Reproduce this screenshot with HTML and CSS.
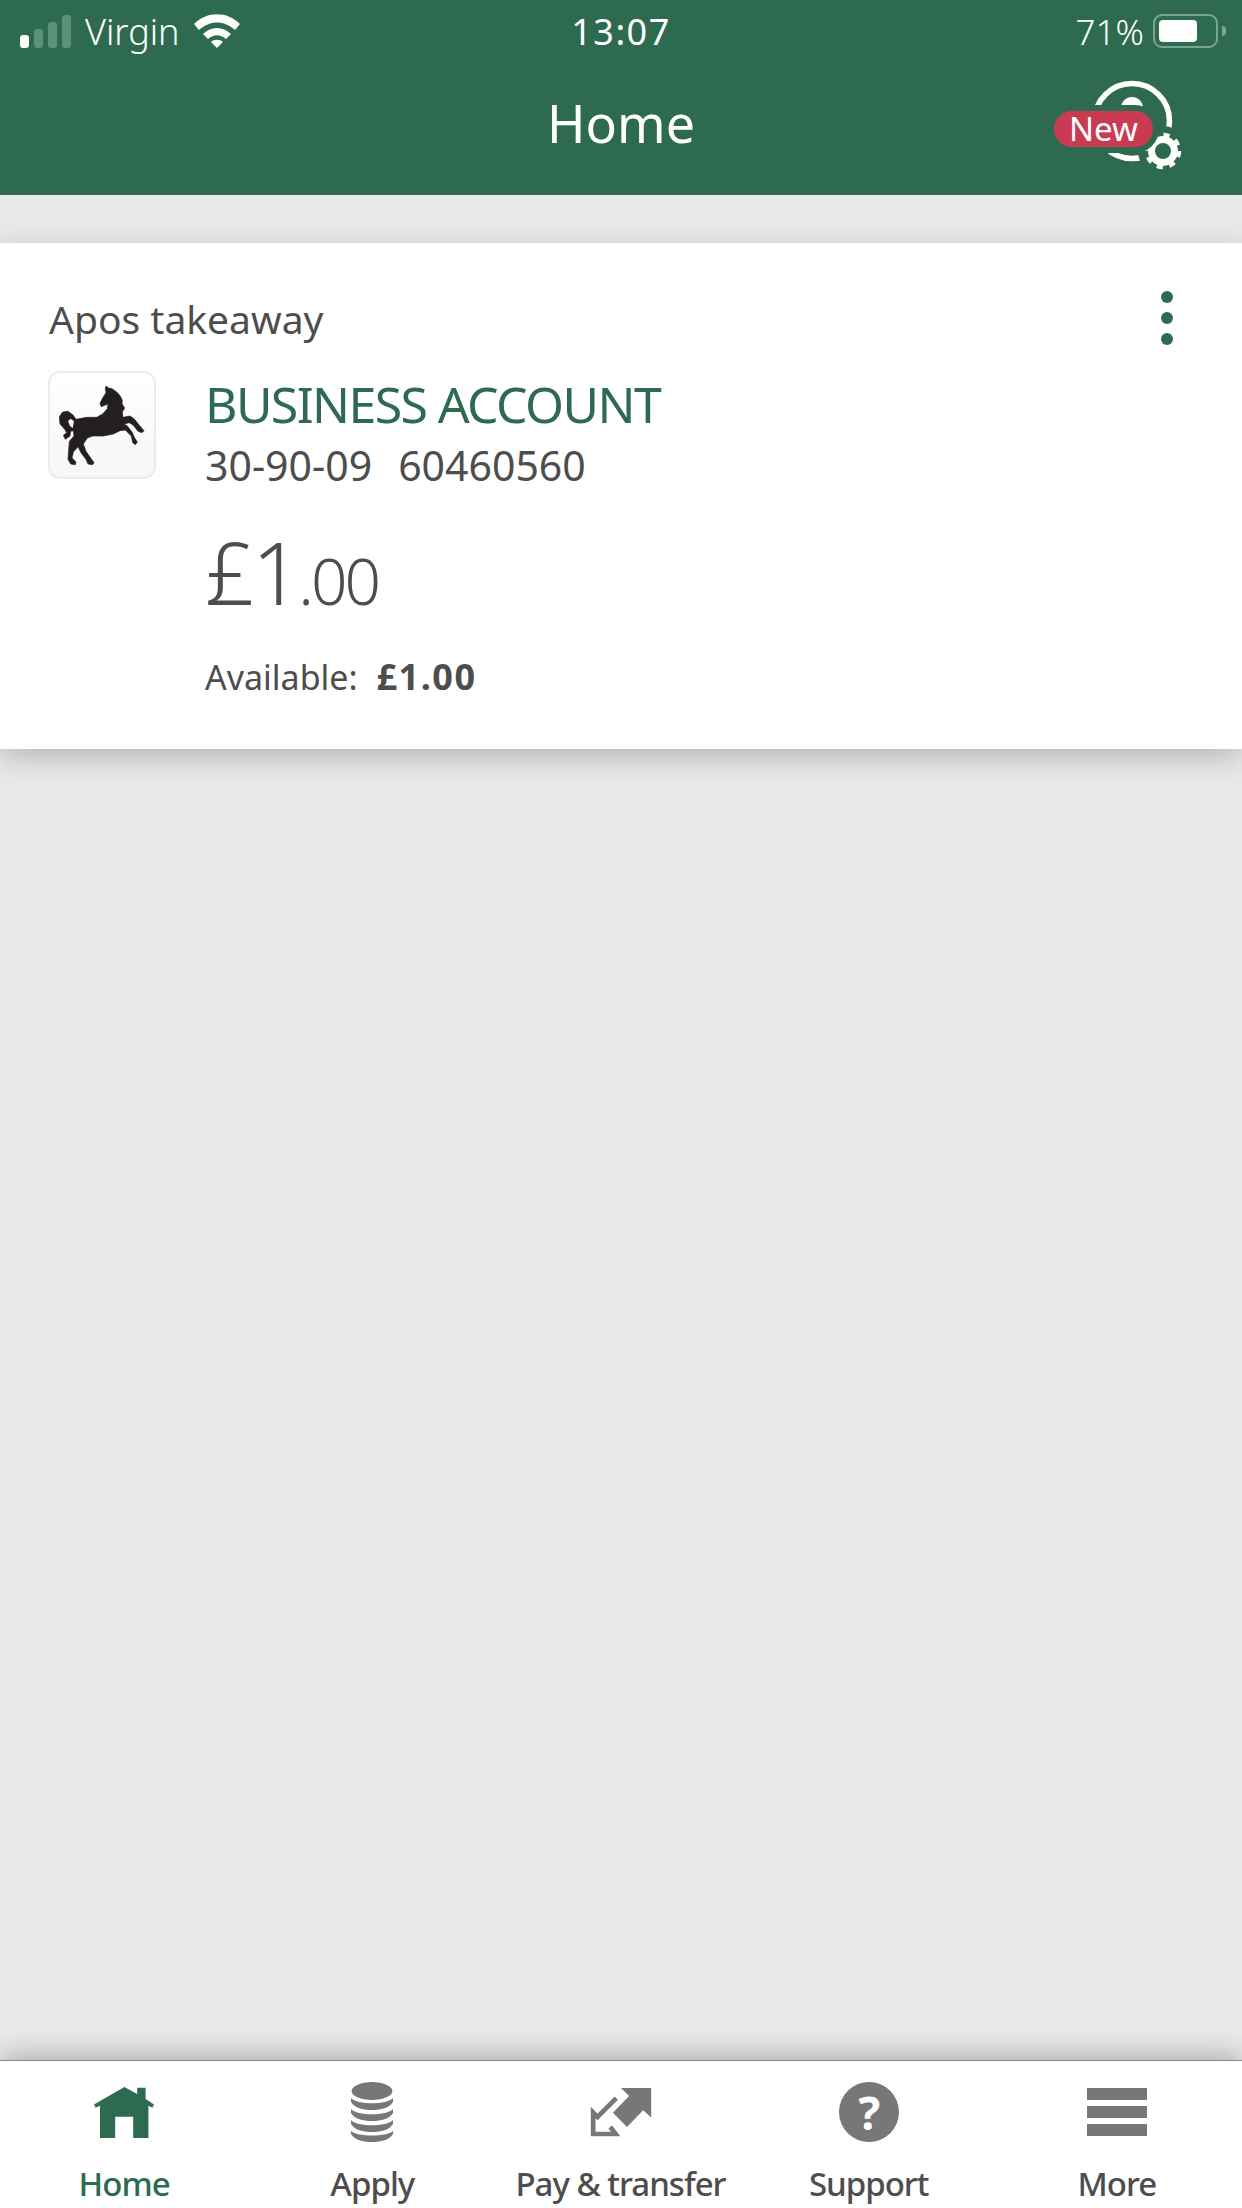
FILE: index.html
```html
<!DOCTYPE html>
<html>
<head>
    <title>Home</title>
    <link rel="stylesheet" href="styles.css">
</head>
<body>
    <header class="app-header">
        <div class="status-bar">
            <div class="status-left">
                <svg class="signal" width="52" height="33" viewBox="0 0 52 33">
                    <rect x="0" y="20" width="9" height="13" rx="3" fill="#fff"/>
                    <rect x="14" y="14" width="9" height="19" rx="3" fill="#5b9179"/>
                    <rect x="28" y="7" width="9" height="26" rx="3" fill="#5b9179"/>
                    <rect x="42" y="0" width="9" height="33" rx="3" fill="#5b9179"/>
                </svg>
                <span class="carrier">Virgin</span>
                <svg class="wifi" width="46" height="34" viewBox="0 0 46 34">
                    <path d="M0 10 C13 -3 33 -3 46 10 L41 16 C30 6 16 6 5 16 Z" fill="#fff"/>
                    <path d="M9 20 C17 12 29 12 37 20 L32 25 C26 20 20 20 14 25 Z" fill="#fff"/>
                    <path d="M17 28 C20 25 26 25 29 28 L23 34 Z" fill="#fff"/>
                </svg>
            </div>
            <div class="status-time">13:07</div>
            <div class="status-right">
                <span class="battery-pct">71%</span>
                <div class="battery"><div class="battery-fill"></div></div>
                <div class="battery-nub"></div>
            </div>
        </div>
        <div class="title-bar">
            <div></div>
            <h1>Home</h1>
            <div class="settings-btn">
                <svg width="100" height="92" viewBox="0 0 100 92">
                    <circle cx="47" cy="43" r="37.5" fill="none" stroke="#fff" stroke-width="5.5"/>
                    <circle cx="47" cy="30" r="11" fill="#fff"/>
                    <circle cx="78" cy="73" r="25" fill="#2d6a50"/>
                    <circle cx="78" cy="73" r="11.5" fill="none" stroke="#fff" stroke-width="7"/>
                    <circle cx="78" cy="73" r="16" fill="none" stroke="#fff" stroke-width="4.5" stroke-dasharray="6 6.57"/>
                </svg>
                <span class="new-badge">New</span>
            </div>
        </div>
    </header>

    <main class="content">
        <section class="account-card">
            <div class="card-top">
                <span class="business-name">Apos takeaway</span>
                <div class="kebab"><i></i><i></i><i></i></div>
            </div>
            <div class="card-body">
                <div class="logo-box">
                    <svg width="104" height="100" viewBox="0 0 312 300">
                        <polygon fill="#231f20" stroke="#231f20" stroke-width="2" stroke-linejoin="round" points="168,30 176,36 186,38 196,45 204,52 212,62 217,74 216,84 224,96 217,108 219,124 240,120 252,128 268,148 282,164 276,170 264,166 250,148 238,140 222,144 232,150 246,168 254,186 262,198 256,206 248,200 244,180 226,162 210,164 190,174 160,180 128,180 112,186 100,204 108,226 122,246 132,260 128,266 114,264 108,250 94,232 84,212 70,228 66,246 78,258 76,266 62,264 54,250 56,222 58,196 72,180 70,164 62,166 60,180 46,190 40,178 50,170 44,160 30,144 28,122 38,108 54,106 70,118 78,130 110,124 140,124 158,114 172,98 174,84 164,88 154,92 150,82 158,66 168,50 166,38"/>
                        <polygon fill="#fafafa" points="54,136 62,128 72,136 68,156 60,150"/>
                    </svg>
                </div>
                <div class="account-info">
                    <div class="account-type">BUSINESS ACCOUNT</div>
                    <div class="account-nums"><span>30-90-09</span><span>60460560</span></div>
                    <div class="balance"><span class="pounds">£1</span><span class="pence">.00</span></div>
                    <div class="available">Available: <b>£1.00</b></div>
                </div>
            </div>
        </section>
    </main>

    <nav class="tab-bar">
        <div class="tab active">
            <div class="tab-icon">
                <svg width="60" height="51" viewBox="238 174 150 152" preserveAspectRatio="none">
                    <path d="M314 174 L346 195 L346 176 L367 176 L367 210 L388 226 L384 236 L374 230 L374 326 L336 326 L336 263 L291 263 L291 326 L253 326 L253 230 L242 236 L238 226 Z" fill="#2d6a50"/>
                </svg>
            </div>
            <span>Home</span>
        </div>
        <div class="tab">
            <div class="tab-icon">
                <svg width="42" height="60" viewBox="0 0 36 60" preserveAspectRatio="none" fill="#777">
                    <ellipse cx="18" cy="9" rx="17.5" ry="9"/>
                    <path d="M0 16 C5 23 31 23 36 16 L36 20 C33 26 26 28 18 28 C10 28 3 26 0 20 Z"/>
                    <path d="M0 27 C5 34 31 34 36 27 L36 31 C33 37 26 39 18 39 C10 39 3 37 0 31 Z"/>
                    <path d="M0 38 C5 45 31 45 36 38 L36 42 C33 48 26 50 18 50 C10 50 3 48 0 42 Z"/>
                    <path d="M0 49 C5 55 31 55 36 49 L36 52 C33 58 26 60 18 60 C10 60 3 58 0 52 Z"/>
                </svg>
            </div>
            <span>Apply</span>
        </div>
        <div class="tab">
            <div class="tab-icon">
                <svg width="62" height="49" viewBox="30 42 180 146">
                    <polygon points="120,42 210,42 210,130 186,108 138,158 96,116 144,66" fill="#777"/>
                    <polyline points="106,72 50,128 37,115 37,179 104,179 88,158" fill="none" stroke="#777" stroke-width="14"/>
                </svg>
            </div>
            <span>Pay &amp; transfer</span>
        </div>
        <div class="tab">
            <div class="tab-icon">
                <div class="help-icon">?</div>
            </div>
            <span>Support</span>
        </div>
        <div class="tab">
            <div class="tab-icon">
                <div class="more-icon"><i></i><i></i><i></i></div>
            </div>
            <span>More</span>
        </div>
    </nav>
</body>
</html>
```

FILE: styles.css
```css
* {
    box-sizing: border-box;
}

body {
    font-family: "Noto Sans", "Open Sans", sans-serif;
    display: flex;
    flex-direction: column;
    width: 1242px;
    height: 2208px;
    margin: 0;
    overflow: hidden;
    background-color: #e9e9e9;
    color: #4d4d4d;
}

.app-header {
    height: 195px;
    background-color: #2d6a50;
    color: #fff;
}

.status-bar {
    display: grid;
    grid-template-columns: 1fr auto 1fr;
    align-items: center;
    height: 62px;
    padding: 0 20px;
    font-size: 36px;
}

.status-left {
    display: flex;
    align-items: center;
}

.signal {
    margin-right: 13px;
}

.carrier {
    font-weight: 300;
}

.wifi {
    margin-left: 14px;
}

.status-time {
    font-weight: 400;
    letter-spacing: 1.5px;
}

.status-right {
    display: flex;
    align-items: center;
    justify-content: flex-end;
    margin-right: -4px;
    font-size: 35px;
    font-weight: 300;
}

.battery {
    width: 65px;
    height: 34px;
    margin-left: 9px;
    padding: 4px;
    border: 2px solid #7ba592;
    border-radius: 9px;
}

.battery-fill {
    width: 38px;
    height: 22px;
    background-color: #fff;
    border-radius: 4px;
}

.battery-nub {
    width: 4px;
    height: 10px;
    margin-left: 4px;
    background-color: #7ba592;
    border-radius: 0 4px 4px 0;
}

.title-bar {
    display: grid;
    grid-template-columns: 1fr auto 1fr;
}

.title-bar h1 {
    margin: 26px 0 0;
    font-size: 52px;
    font-weight: 400;
    line-height: 70px;
}

.settings-btn {
    position: relative;
    justify-self: end;
    width: 100px;
    height: 92px;
    margin: 16px 57px 0 0;
}

.new-badge {
    position: absolute;
    left: -31px;
    top: 33px;
    width: 99px;
    height: 36px;
    background-color: #c93b51;
    border-radius: 18px;
    box-shadow: 0 0 0 6px #2d6a50;
    font-size: 33px;
    line-height: 35px;
    text-align: center;
}

.content {
    flex: 1;
    padding-top: 48px;
}

.account-card {
    height: 506px;
    padding: 36px 48px 0;
    background-color: #fff;
    box-shadow: 0 8px 28px rgba(0, 0, 0, 0.22);
}

.card-top {
    display: flex;
    justify-content: space-between;
    height: 92px;
}

.business-name {
    margin: 13px 0 0 1px;
    font-size: 39px;
    line-height: 54px;
}

.kebab {
    display: flex;
    flex-direction: column;
    gap: 9px;
    margin: 12px 21px 0 0;
}

.kebab i {
    width: 12px;
    height: 12px;
    background-color: #2d6a50;
    border-radius: 50%;
}

.card-body {
    display: flex;
}

.logo-box {
    display: flex;
    align-items: center;
    justify-content: center;
    width: 108px;
    height: 108px;
    padding-top: 2px;
    border: 2px solid #ececec;
    border-radius: 12px;
    background: linear-gradient(#fff, #f6f6f6);
}

.account-info {
    margin-left: 49px;
}

.account-type {
    color: #2d6a50;
    font-size: 50px;
    line-height: 66px;
    letter-spacing: -1.6px;
}

.account-nums {
    display: flex;
    gap: 26px;
    font-size: 41px;
    line-height: 56px;
}

.balance {
    margin-top: 28px;
    font-weight: 300;
    line-height: 100px;
}

.pounds {
    font-size: 87px;
    letter-spacing: -3px;
}

.pence {
    font-size: 64px;
    letter-spacing: -3px;
}

.available {
    margin-top: 5px;
    font-size: 34px;
    line-height: 46px;
}

.available b {
    margin-left: 10px;
    font-size: 36px;
    letter-spacing: 1.5px;
}

.tab-bar {
    display: flex;
    height: 148px;
    padding: 21px 1px 0 0;
    background-color: #fff;
    border-top: 1px solid #8a8a8a;
    box-shadow: 0 -4px 26px rgba(0, 0, 0, 0.28);
    position: relative;
}

.tab {
    display: flex;
    flex: 1;
    flex-direction: column;
    align-items: center;
    font-size: 33px;
    font-weight: 500;
    letter-spacing: -1px;
}

.tab span {
    margin-top: 19px;
    line-height: 46px;
}

.tab.active {
    color: #2d6a50;
}

.tab-icon {
    display: flex;
    align-items: center;
    justify-content: center;
    height: 60px;
}

.help-icon {
    width: 60px;
    height: 60px;
    background-color: #777;
    border-radius: 50%;
    color: #fff;
    font-size: 46px;
    font-weight: 700;
    line-height: 60px;
    text-align: center;
}

.more-icon {
    display: flex;
    flex-direction: column;
    gap: 6px;
}

.more-icon i {
    width: 60px;
    height: 12px;
    background-color: #777;
}
```
